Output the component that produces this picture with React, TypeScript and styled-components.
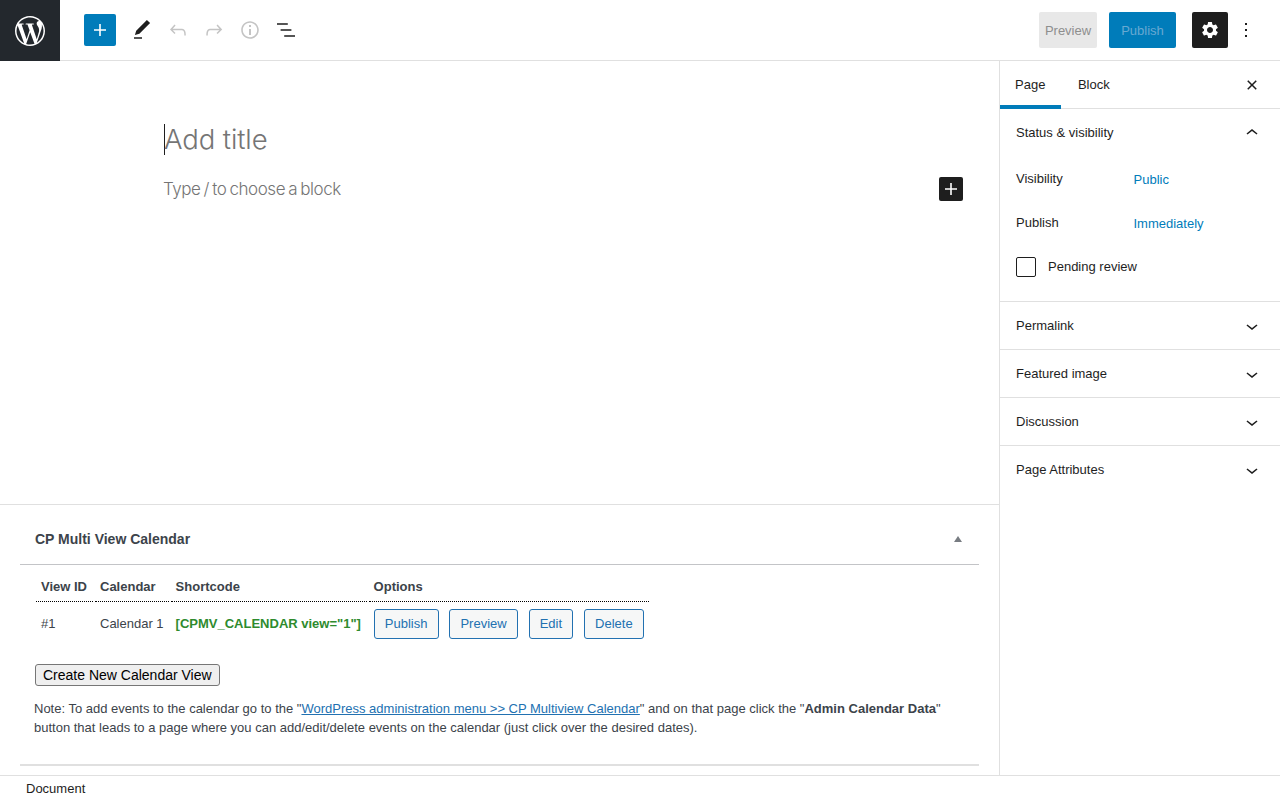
import React from 'react';
import styled, { createGlobalStyle } from 'styled-components';
import { SiWordpress } from 'react-icons/si';
import { MdSettings } from 'react-icons/md';

const colors = {
  blue: '#007cba',
  dark: '#1e1e1e',
  logo: '#23282d',
  border: '#e0e0e0',
  text: '#1e1e1e',
  wpText: '#3c434a',
  wpBlue: '#2271b1',
  disabled: '#c4c4c4',
};

const GlobalStyle = createGlobalStyle`
  html, body {
    margin: 0;
    padding: 0;
    height: 100%;
    background: #fff;
    font-family: "Liberation Sans", Arial, sans-serif;
    font-size: 13px;
    color: ${colors.text};
    overflow: hidden;
  }
`;

const icons = {
  plus: 'M18 11.2h-5.2V6h-1.6v5.2H6v1.6h5.2V18h1.6v-5.2H18z',
  pencil: 'M20.1 5.1L16.9 2 6.2 12.7l-1.3 4.4 4.5-1.3L20.1 5.1zM4 20.8h8v-1.5H4v1.5z',
  undo: 'M18.3 11.7c-.6-.6-1.4-.9-2.3-.9H6.7l2.9-3.3-1.1-1-4.5 5L8.5 16l1-1-2.7-2.7H16c.5 0 .9.2 1.3.5 1 1 1 3.4 1 4.5v.3h1.5v-.2c0-1.5 0-4.3-1.5-5.7z',
  redo: 'M15.6 6.5l-1.1 1 2.9 3.3H8c-.9 0-1.7.3-2.3.9-1.4 1.5-1.4 4.2-1.4 5.6v.2h1.5v-.3c0-1.1 0-3.5 1-4.5.3-.3.7-.5 1.3-.5h9.2L14.5 15l1.1 1.1 4.6-4.6-4.6-5z',
  info: 'M12 3.2c-4.8 0-8.8 3.9-8.8 8.8 0 4.8 3.9 8.8 8.8 8.8 4.8 0 8.8-3.9 8.8-8.8 0-4.8-4-8.8-8.8-8.8zm0 16c-4 0-7.2-3.3-7.2-7.2C4.8 8 8 4.8 12 4.8s7.2 3.3 7.2 7.2c0 4-3.2 7.2-7.2 7.2zM11 17h2v-6h-2v6zm0-8h2V7h-2v2z',
  list: 'M13.8 5.2H3v1.5h10.8V5.2zm-3.6 12v1.5H21v-1.5H10.2zm7.2-6H6.6v1.5h10.8v-1.5z',
  more: 'M13 19h-2v-2h2v2zm0-6h-2v-2h2v2zm0-6h-2V5h2v2z',
  close: 'M12 13.06l3.712 3.713 1.061-1.06L13.061 12l3.712-3.712-1.06-1.06L12 10.938 8.288 7.227l-1.061 1.06L10.939 12l-3.712 3.712 1.06 1.061L12 13.061z',
  up: 'M6.5 12.4L12 8l5.5 4.4-.9 1.2L12 10l-4.5 3.6-1-1.2z',
  down: 'M17.5 11.6L12 16l-5.5-4.4.9-1.2L12 14l4.5-3.6 1 1.2z',
};

const Icon = ({ name, size = 24 }: { name: keyof typeof icons; size?: number }) => (
  <svg width={size} height={size} viewBox="0 0 24 24" fill="currentColor" aria-hidden="true">
    <path d={icons[name]} />
  </svg>
);

const Shell = styled.div`
  display: flex;
  flex-direction: column;
  height: 800px;
`;

const TopBar = styled.header`
  display: flex;
  align-items: center;
  height: 60px;
  flex: none;
  border-bottom: 1px solid ${colors.border};
`;

const LogoTile = styled.div`
  width: 60px;
  height: 61px;
  margin-bottom: -1px;
  background: ${colors.logo};
  color: #fff;
  display: flex;
  align-items: center;
  justify-content: center;
`;

const InserterButton = styled.button`
  width: 32px;
  height: 32px;
  margin: 0 8px 0 24px;
  padding: 0;
  border: 0;
  border-radius: 2px;
  background: ${colors.blue};
  color: #fff;
  display: flex;
  align-items: center;
  justify-content: center;
`;

const ToolButton = styled.button<{ $muted?: boolean }>`
  width: 36px;
  height: 36px;
  padding: 0;
  border: 0;
  background: none;
  color: ${(p) => (p.$muted ? colors.disabled : colors.dark)};
  display: flex;
  align-items: center;
  justify-content: center;
`;

const TopActions = styled.div`
  margin-left: auto;
  display: flex;
  align-items: center;
  padding-right: 22px;
`;

const PreviewButton = styled.button`
  width: 58px;
  height: 36px;
  padding: 0;
  border: 0;
  border-radius: 2px;
  background: #e8e8e8;
  color: #8e8e8e;
  font: inherit;
  margin-right: 12px;
`;

const PublishButton = styled.button`
  width: 67px;
  height: 36px;
  padding: 0;
  border: 0;
  border-radius: 2px;
  background: ${colors.blue};
  color: #68a9d2;
  font: inherit;
  margin-right: 16px;
`;

const SettingsButton = styled.button`
  width: 36px;
  height: 36px;
  padding: 0;
  border: 0;
  border-radius: 2px;
  background: ${colors.dark};
  color: #fff;
  margin-right: 6px;
  display: flex;
  align-items: center;
  justify-content: center;
`;

const MoreButton = styled.button`
  width: 24px;
  height: 36px;
  padding: 0;
  border: 0;
  background: none;
  color: ${colors.dark};
  display: flex;
  align-items: center;
  justify-content: center;
`;

const Body = styled.div`
  flex: 1;
  min-height: 0;
  display: flex;
`;

const MainColumn = styled.main`
  flex: 1;
  min-width: 0;
  display: flex;
  flex-direction: column;
  border-right: 1px solid ${colors.border};
  overflow: hidden;
`;

const EditorArea = styled.div`
  height: 443px;
  flex: none;
  padding-top: 63px;
  box-sizing: border-box;
`;

const TitleRow = styled.div`
  padding-left: 164px;
  margin-bottom: 22px;
`;

const TitlePlaceholder = styled.div`
  display: inline-block;
  height: 31px;
  line-height: 30px;
  border-left: 1px solid ${colors.dark};
  text-indent: -1px;
  font-family: Inter, "Noto Sans", sans-serif;
  font-size: 27.5px;
  font-weight: 300;
  color: #757575;
  letter-spacing: -0.1px;
`;

const BlockRow = styled.div`
  display: flex;
  align-items: center;
  justify-content: space-between;
  padding: 0 36px 0 163px;
`;

const BlockPlaceholder = styled.div`
  font-family: Inter, "Noto Sans", sans-serif;
  font-size: 17px;
  font-weight: 300;
  letter-spacing: -0.45px;
  word-spacing: -1.2px;
  color: #757575;
`;

const BlockAdd = styled.button`
  width: 24px;
  height: 24px;
  padding: 0;
  border: 0;
  border-radius: 2px;
  background: ${colors.dark};
  color: #fff;
  display: flex;
  align-items: center;
  justify-content: center;
`;

const MetaArea = styled.section`
  flex: 1;
  min-height: 0;
  border-top: 1px solid ${colors.border};
  padding: 0 20px;
  color: ${colors.wpText};
`;

const MetaHeader = styled.div`
  height: 51px;
  display: flex;
  align-items: center;
  justify-content: space-between;
  padding: 8px 17px 0 15px;
  border-bottom: 1px solid #c3c4c7;
`;

const MetaTitle = styled.h2`
  margin: 0;
  font-size: 14px;
  font-weight: 700;
  color: #3c434a;
`;

const Caret = styled.span`
  width: 0;
  height: 0;
  border-left: 4px solid transparent;
  border-right: 4px solid transparent;
  border-bottom: 6px solid #787c82;
`;

const MetaBody = styled.div`
  padding: 5px 0 0 14px;
`;

const ViewsTable = styled.table`
  border-collapse: separate;
  border-spacing: 2px;
  font-size: 13px;
  margin: 0 0 18px 0;
`;

const HeadCell = styled.th<{ $width?: number }>`
  text-align: left;
  padding: 5px;
  font-weight: 700;
  line-height: 19px;
  border-bottom: 1px dotted #000;
  white-space: nowrap;
  width: ${(p) => (p.$width ? `${p.$width}px` : 'auto')};
`;

const BodyCell = styled.td`
  padding: 4px 5px 6px;
  line-height: 19px;
  white-space: nowrap;
`;

const OptionsCell = styled(BodyCell)`
  padding: 5px;
`;

const ShortcodeText = styled.span`
  color: #2e8b2e;
  font-weight: 700;
`;

const RowButton = styled.a`
  display: inline-block;
  box-sizing: border-box;
  min-height: 30px;
  line-height: 28px;
  padding: 0 10.2px;
  margin-right: 7px;
  border: 1px solid ${colors.wpBlue};
  border-radius: 3px;
  background: #f6f7f7;
  color: ${colors.wpBlue};
  font-size: 13px;

  &:last-child {
    margin-right: 0;
  }
`;

const CreateButton = styled.button`
  display: block;
  height: 22px;
  margin: 0 0 0 1px;
  padding: 0 7px;
  border: 1px solid #767676;
  border-radius: 3px;
  background: #efefef;
  color: #000;
  font-family: "Liberation Sans", Arial, sans-serif;
  font-size: 14px;
`;

const Note = styled.p`
  margin: 13px 0 0 0;
  line-height: 19px;
  width: 925px;
`;

const NoteLink = styled.a`
  color: ${colors.wpBlue};
  text-decoration: underline;
`;

const MetaEnd = styled.div`
  margin-top: 27px;
  margin-left: -14px;
  border-top: 2px solid ${colors.border};
`;

const Sidebar = styled.aside`
  width: 280px;
  flex: none;
`;

const TabBar = styled.div`
  display: flex;
  align-items: stretch;
  height: 47px;
  border-bottom: 1px solid ${colors.border};
`;

const Tab = styled.div<{ $active?: boolean }>`
  display: flex;
  align-items: center;
  height: 48px;
  box-sizing: border-box;
  padding: 0 ${(p) => (p.$active ? '15.5px' : '17px')} 2px ${(p) => (p.$active ? '15px' : '17px')};
  margin-bottom: -1px;
  color: ${colors.text};
  box-shadow: ${(p) => (p.$active ? `inset 0 -4px 0 ${colors.blue}` : 'none')};
`;

const TabClose = styled.button`
  margin: 0 16px 0 auto;
  padding: 0;
  border: 0;
  background: none;
  color: ${colors.text};
  display: flex;
  align-items: center;
`;

const Panel = styled.section<{ $last?: boolean }>`
  border-bottom: ${(p) => (p.$last ? '0' : `1px solid ${colors.border}`)};
`;

const PanelHead = styled.div`
  height: 47px;
  display: flex;
  align-items: center;
  justify-content: space-between;
  padding: 0 16px;
  color: ${colors.text};
`;

const PanelContent = styled.div`
  padding: 1px 16px 12px;
`;

const SettingRow = styled.div`
  display: flex;
  align-items: center;
  height: 44px;
`;

const SettingLabel = styled.span`
  width: 117.5px;
  margin-top: -2px;
`;

const SettingValue = styled.a`
  color: ${colors.blue};
`;

const CheckRow = styled.label`
  display: flex;
  align-items: center;
  height: 44px;
  gap: 12px;
`;

const CheckBox = styled.span`
  width: 20px;
  height: 20px;
  box-sizing: border-box;
  border: 1px solid ${colors.dark};
  border-radius: 2px;
  background: #fff;
`;

const CheckLabel = styled.span`
  margin-top: -2px;
`;

const StatusBar = styled.footer`
  height: 24px;
  flex: none;
  border-top: 1px solid ${colors.border};
  padding-left: 26px;
  display: flex;
  align-items: center;
  color: ${colors.text};
  background: #fff;
`;

const views = [{ id: '#1', calendar: 'Calendar 1', code: '[CPMV_CALENDAR view="1"]' }];
const panels = ['Permalink', 'Featured image', 'Discussion', 'Page Attributes'];

export default function App() {
  return (
    <Shell>
      <GlobalStyle />
      <TopBar>
        <LogoTile>
          <SiWordpress size={30} />
        </LogoTile>
        <InserterButton><Icon name="plus" /></InserterButton>
        <ToolButton><Icon name="pencil" /></ToolButton>
        <ToolButton $muted><Icon name="undo" /></ToolButton>
        <ToolButton $muted><Icon name="redo" /></ToolButton>
        <ToolButton $muted><Icon name="info" /></ToolButton>
        <ToolButton><Icon name="list" /></ToolButton>
        <TopActions>
          <PreviewButton>Preview</PreviewButton>
          <PublishButton>Publish</PublishButton>
          <SettingsButton><MdSettings size={20} /></SettingsButton>
          <MoreButton><Icon name="more" /></MoreButton>
        </TopActions>
      </TopBar>

      <Body>
        <MainColumn>
          <EditorArea>
            <TitleRow>
              <TitlePlaceholder>Add title</TitlePlaceholder>
            </TitleRow>
            <BlockRow>
              <BlockPlaceholder>Type / to choose a block</BlockPlaceholder>
              <BlockAdd><Icon name="plus" /></BlockAdd>
            </BlockRow>
          </EditorArea>

          <MetaArea>
            <MetaHeader>
              <MetaTitle>CP Multi View Calendar</MetaTitle>
              <Caret />
            </MetaHeader>
            <MetaBody>
              <ViewsTable>
                <thead>
                  <tr>
                    <HeadCell $width={47}>View ID</HeadCell>
                    <HeadCell>Calendar</HeadCell>
                    <HeadCell $width={186}>Shortcode</HeadCell>
                    <HeadCell>Options</HeadCell>
                  </tr>
                </thead>
                <tbody>
                  {views.map((view) => (
                    <tr key={view.id}>
                      <BodyCell>{view.id}</BodyCell>
                      <BodyCell>{view.calendar}</BodyCell>
                      <BodyCell><ShortcodeText>{view.code}</ShortcodeText></BodyCell>
                      <OptionsCell>
                        <RowButton>Publish</RowButton>{' '}
                        <RowButton>Preview</RowButton>{' '}
                        <RowButton>Edit</RowButton>{' '}
                        <RowButton>Delete</RowButton>
                      </OptionsCell>
                    </tr>
                  ))}
                </tbody>
              </ViewsTable>
              <CreateButton>Create New Calendar View</CreateButton>
              <Note>
                Note: To add events to the calendar go to the "
                <NoteLink>WordPress administration menu &gt;&gt; CP Multiview Calendar</NoteLink>
                " and on that page click the "<b>Admin Calendar Data</b>" button that leads to a page where you can add/edit/delete events on the calendar (just click over the desired dates).
              </Note>
              <MetaEnd />
            </MetaBody>
          </MetaArea>
        </MainColumn>

        <Sidebar>
          <TabBar>
            <Tab $active>Page</Tab>
            <Tab>Block</Tab>
            <TabClose><Icon name="close" size={24} /></TabClose>
          </TabBar>
          <Panel>
            <PanelHead>
              Status &amp; visibility
              <Icon name="up" />
            </PanelHead>
            <PanelContent>
              <SettingRow>
                <SettingLabel>Visibility</SettingLabel>
                <SettingValue>Public</SettingValue>
              </SettingRow>
              <SettingRow>
                <SettingLabel>Publish</SettingLabel>
                <SettingValue>Immediately</SettingValue>
              </SettingRow>
              <CheckRow>
                <CheckBox />
                <CheckLabel>Pending review</CheckLabel>
              </CheckRow>
            </PanelContent>
          </Panel>
          {panels.map((title, i) => (
            <Panel key={title} $last={i === panels.length - 1}>
              <PanelHead>
                {title}
                <Icon name="down" />
              </PanelHead>
            </Panel>
          ))}
        </Sidebar>
      </Body>

      <StatusBar>Document</StatusBar>
    </Shell>
  );
}
